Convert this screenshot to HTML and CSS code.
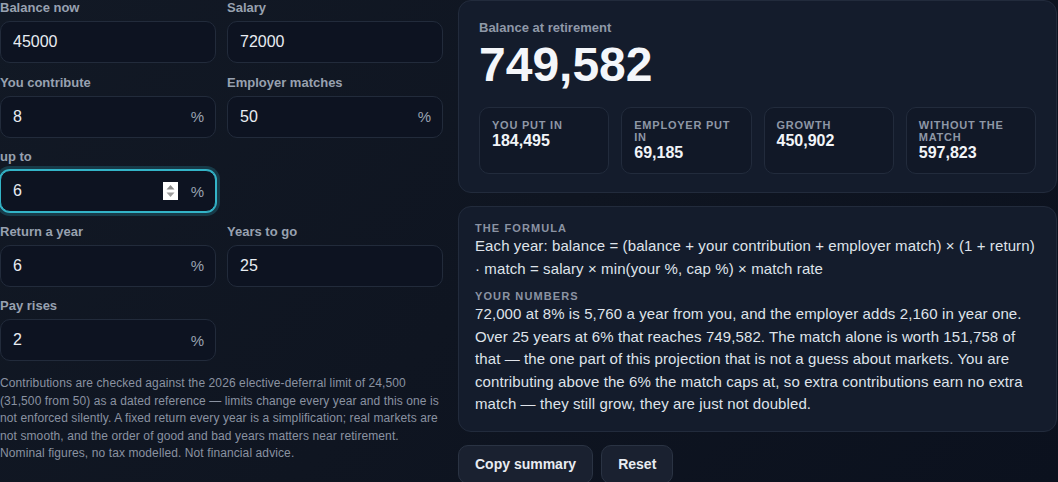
FILE: index.html
```html
<!DOCTYPE html>
<html lang="en">
<head>
<meta charset="utf-8">
<title>Retirement match calculator</title>
<link rel="stylesheet" href="styles.css">
</head>
<body>
<main class="page">
  <section class="inputs">
    <div class="fields">
      <label class="field">
        <span class="field-label">Balance now</span>
        <span class="box"><input class="num" type="text" value="45000"></span>
      </label>
      <label class="field">
        <span class="field-label">Salary</span>
        <span class="box"><input class="num" type="text" value="72000"></span>
      </label>
      <label class="field">
        <span class="field-label">You contribute</span>
        <span class="box"><input class="num" type="text" value="8"><span class="unit">%</span></span>
      </label>
      <label class="field">
        <span class="field-label">Employer matches</span>
        <span class="box"><input class="num" type="text" value="50"><span class="unit">%</span></span>
      </label>
      <label class="field">
        <span class="field-label">up to</span>
        <span class="box box-focus"><input class="num" type="text" value="6"><svg class="spin" width="15" height="18" viewBox="0 0 15 18" aria-hidden="true"><rect width="15" height="18" fill="#ffffff"/><path d="M3.5 7.5 L7.5 3 L11.5 7.5 Z" fill="#8a8a8a"/><path d="M3.5 10.5 L7.5 15 L11.5 10.5 Z" fill="#9c9c9c"/></svg><span class="unit">%</span></span>
      </label>
      <div class="field field-empty"></div>
      <label class="field">
        <span class="field-label">Return a year</span>
        <span class="box"><input class="num" type="text" value="6"><span class="unit">%</span></span>
      </label>
      <label class="field">
        <span class="field-label">Years to go</span>
        <span class="box"><input class="num" type="text" value="25"></span>
      </label>
      <label class="field">
        <span class="field-label">Pay rises</span>
        <span class="box"><input class="num" type="text" value="2"><span class="unit">%</span></span>
      </label>
    </div>
    <p class="note">Contributions are checked against the 2026 elective-deferral limit of 24,500 (31,500 from 50) as a dated reference — limits change every year and this one is not enforced silently. A fixed return every year is a simplification; real markets are not smooth, and the order of good and bad years matters near retirement. Nominal figures, no tax modelled. Not financial advice.</p>
  </section>

  <section class="results">
    <div class="card summary">
      <div class="summary-label">Balance at retirement</div>
      <div class="summary-value">749,582</div>
      <div class="stats">
        <div class="stat"><div class="stat-label">You put in</div><div class="stat-value">184,495</div></div>
        <div class="stat"><div class="stat-label">Employer put in</div><div class="stat-value">69,185</div></div>
        <div class="stat"><div class="stat-label">Growth</div><div class="stat-value">450,902</div></div>
        <div class="stat"><div class="stat-label">Without the match</div><div class="stat-value">597,823</div></div>
      </div>
    </div>

    <div class="card explain">
      <div class="explain-head">The formula</div>
      <p class="explain-text">Each year: balance = (balance + your contribution + employer match) × (1 + return) · match = salary × min(your %, cap %) × match rate</p>
      <div class="explain-head explain-head-2">Your numbers</div>
      <p class="explain-text">72,000 at 8% is 5,760 a year from you, and the employer adds 2,160 in year one. Over 25 years at 6% that reaches 749,582. The match alone is worth 151,758 of that — the one part of this projection that is not a guess about markets. You are contributing above the 6% the match caps at, so extra contributions earn no extra match — they still grow, they are just not doubled.</p>
    </div>

    <div class="actions">
      <button class="btn" type="button">Copy summary</button>
      <button class="btn" type="button">Reset</button>
    </div>
  </section>
</main>
</body>
</html>
```
FILE: styles.css
```css
* { box-sizing: border-box; }

html, body {
  margin: 0;
  height: 100%;
}

body {
  background: linear-gradient(135deg, #121925 0%, #0f1521 50%, #0b111e 100%);
  color: #e5e9f0;
  font-family: "Liberation Sans", Arial, sans-serif;
  overflow: hidden;
}

.page {
  display: grid;
  grid-template-columns: 443px 599px;
  column-gap: 15px;
  align-items: start;
}

/* ---------- inputs ---------- */
.fields {
  display: grid;
  grid-template-columns: 216px 216px;
  column-gap: 11px;
  row-gap: 11.5px;
}

.field {
  display: flex;
  flex-direction: column;
}

.field-label {
  font-size: 13px;
  font-weight: 700;
  line-height: 16px;
  color: #98a1b0;
  margin-bottom: 5px;
}

.box {
  display: flex;
  align-items: center;
  height: 42px;
  padding: 0 11px 0 12px;
  background: #0d1321;
  border: 1px solid #222b3b;
  border-radius: 10px;
}

.box-focus {
  border-color: #33b4c8;
  box-shadow: 0 0 0 1px #33b4c8, 0 0 0 4px rgba(40, 150, 170, 0.28);
}

.num {
  flex: 1;
  min-width: 0;
  width: 0;
  background: transparent;
  border: 0;
  outline: none;
  padding: 0;
  font-family: inherit;
  font-size: 16px;
  color: #e8ecf2;
}

.unit {
  font-size: 15px;
  color: #9aa2b1;
}

.spin {
  flex: none;
  margin-right: 13px;
}

.note {
  margin: 14px 0 0;
  font-size: 12px;
  line-height: 17.5px;
  letter-spacing: 0.1px;
  color: #8a92a1;
}

/* ---------- results ---------- */
.results {
  display: flex;
  flex-direction: column;
  gap: 13px;
}

.card {
  background: #141c2c;
  border: 1px solid #222b3c;
  border-radius: 13px;
}

.summary {
  padding: 19px 20px 18px;
}

.summary-label {
  font-size: 13px;
  font-weight: 700;
  line-height: 16px;
  color: #8f98a8;
}

.summary-value {
  margin-top: 4.5px;
  font-size: 48px;
  font-weight: 700;
  line-height: 48px;
  color: #f4f6fa;
}

.stats {
  margin-top: 18.5px;
  display: grid;
  grid-template-columns: repeat(4, 1fr);
  gap: 12px;
}

.stat {
  padding: 11px 12px;
  background: #111827;
  border: 1px solid #222b3c;
  border-radius: 10px;
}

.stat-label {
  font-size: 11px;
  font-weight: 700;
  line-height: 12px;
  letter-spacing: 0.07em;
  text-transform: uppercase;
  color: #8e97a6;
}

.stat-value {
  font-size: 16px;
  font-weight: 700;
  line-height: 19px;
  color: #f1f4f8;
}

.explain {
  padding: 14px 16px 15px;
}

.explain-head {
  font-size: 11px;
  font-weight: 700;
  line-height: 14px;
  letter-spacing: 0.1em;
  text-transform: uppercase;
  color: #8b93a3;
}

.explain-head-2 {
  margin-top: 9px;
}

.explain-text {
  margin: 0;
  font-size: 15px;
  line-height: 22.5px;
  letter-spacing: 0.1px;
  color: #dfe3ea;
}

.actions {
  display: flex;
  gap: 8px;
}

.btn {
  padding: 10px 16px;
  font-family: inherit;
  font-size: 14px;
  font-weight: 700;
  line-height: 17px;
  color: #e8ecf2;
  background: #1a2130;
  border: 1px solid #2a3343;
  border-radius: 10px;
}
```
